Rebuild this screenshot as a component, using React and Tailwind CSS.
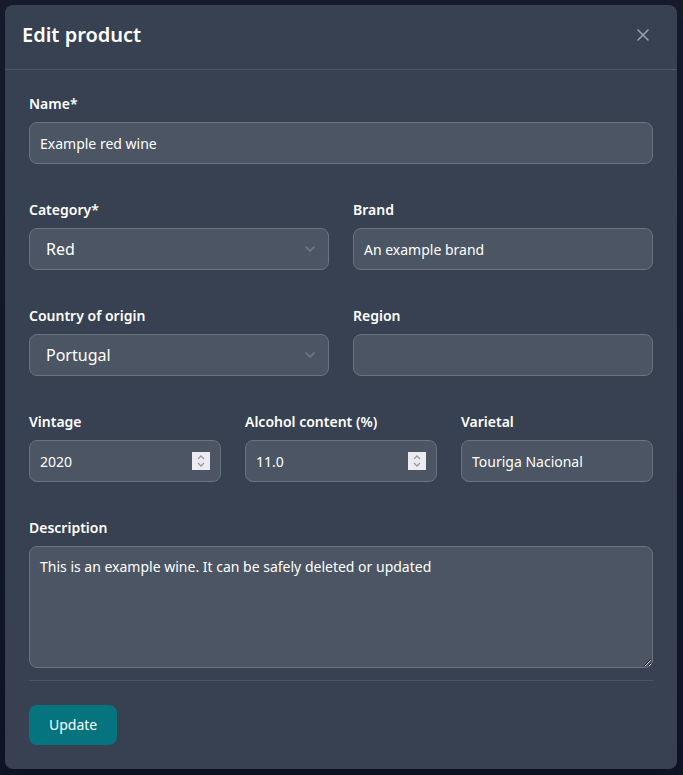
import { X, ChevronDown } from "lucide-react";

const input =
  "w-full h-[42px] rounded-lg border border-[#6b7280] bg-[#4b5563] px-[10px] text-sm text-white outline-none";

function Field({ label, children }) {
  return (
    <div className="flex flex-col">
      <label className="mb-2 text-sm font-semibold leading-5 text-white">{label}</label>
      {children}
    </div>
  );
}

function Select({ value }) {
  return (
    <div className="relative">
      <div className="flex h-[42px] w-full items-center rounded-lg border border-[#6b7280] bg-[#4b5563] pl-4 text-base text-white">
        {value}
      </div>
      <ChevronDown className="absolute right-[11px] top-[13px] h-4 w-4 text-[#6b7280]" strokeWidth={2.75} />
    </div>
  );
}

function NumberInput({ value }) {
  return (
    <div className="relative">
      <input className={input} defaultValue={value} />
      <div className="absolute right-[11px] top-[12px] flex h-[18px] w-[18px] items-center justify-center bg-[#ececf0]">
        <svg width="10" height="14" viewBox="0 0 10 14" fill="none" stroke="#9a9aa2" strokeWidth="1.4">
          <path d="M2 5 L5 2 L8 5" />
          <path d="M2 9 L5 12 L8 9" />
        </svg>
      </div>
    </div>
  );
}

export default function App() {
  return (
    <div
      className="min-h-[775px] bg-gradient-to-b from-[#171a2a] to-[#0e1626] p-[5px]"
      style={{ fontFamily: "'Noto Sans', sans-serif" }}
    >
      <div className="w-[672px] rounded-lg bg-[#374151] shadow-xl">
        {/* Header */}
        <div className="flex h-[65px] items-start justify-between border-b border-[#4b5563] pl-[17px] pr-[24px] pt-4">
          <h3 className="text-xl font-semibold leading-7 text-white">Edit product</h3>
          <X className="mt-1 h-5 w-5 text-[#9ca3af]" strokeWidth={1.75} />
        </div>

        {/* Body */}
        <div className="px-6 pt-6">
          <div className="flex flex-col gap-9">
            <Field label="Name*">
              <input className={input} defaultValue="Example red wine" />
            </Field>
            <div className="grid grid-cols-2 gap-6">
              <Field label="Category*">
                <Select value="Red" />
              </Field>
              <Field label="Brand">
                <input className={input} defaultValue="An example brand" />
              </Field>
            </div>
            <div className="grid grid-cols-2 gap-6">
              <Field label="Country of origin">
                <Select value="Portugal" />
              </Field>
              <Field label="Region">
                <input className={input} defaultValue="" />
              </Field>
            </div>
            <div className="grid grid-cols-3 gap-6">
              <Field label="Vintage">
                <NumberInput value="2020" />
              </Field>
              <Field label="Alcohol content (%)">
                <NumberInput value="11.0" />
              </Field>
              <Field label="Varietal">
                <input className={input} defaultValue="Touriga Nacional" />
              </Field>
            </div>
            <Field label="Description">
              <textarea
                className="block h-[122px] w-full rounded-lg border border-[#6b7280] bg-[#4b5563] px-[10px] py-[10px] text-sm text-white outline-none"
                defaultValue="This is an example wine. It can be safely deleted or updated"
              />
            </Field>
          </div>
          <div className="mt-[12px] border-t border-[#4b5563] pb-6 pt-6">
            <button className="h-10 rounded-lg bg-[#06747f] px-5 text-sm font-normal text-white">
              Update
            </button>
          </div>
        </div>
      </div>
    </div>
  );
}
